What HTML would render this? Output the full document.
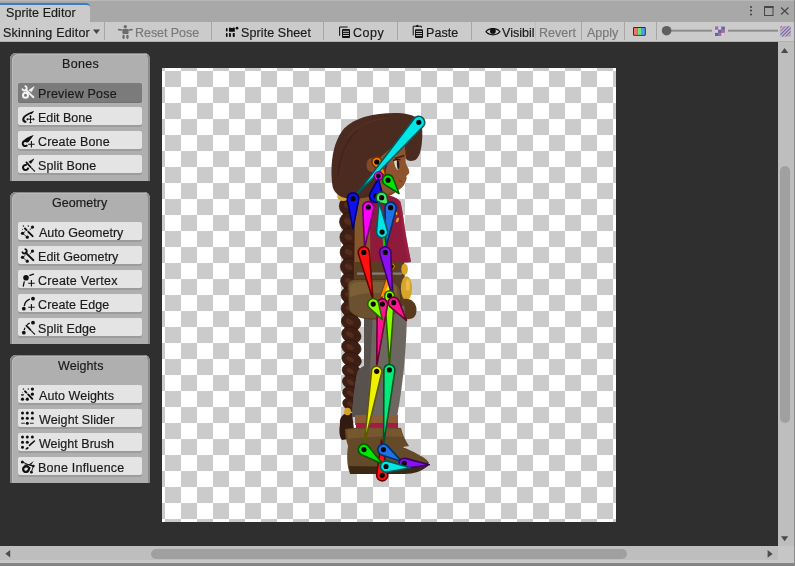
<!DOCTYPE html>
<html><head><meta charset="utf-8"><style>
html,body{margin:0;padding:0;}
body{width:795px;height:566px;position:relative;overflow:hidden;background:#2f2f2f;font-family:"Liberation Sans",sans-serif;font-size:12.5px;color:#1b1b1b;}
.a{position:absolute;}
.t{position:absolute;line-height:14px;white-space:nowrap;will-change:transform;-webkit-text-stroke:0.2px currentColor;}
#tabstrip{left:0;top:0;width:795px;height:22px;background:#a8a8a8;border-top:1px solid #b8b8b8;box-sizing:border-box;}
#tab{left:0;top:3px;width:90px;height:19px;background:#cbcbcb;border-top:2px solid #3b7cc9;box-sizing:border-box;border-top-right-radius:4px;}
#toolbar{left:0;top:22px;width:795px;height:20px;background:#cbcbcb;border-bottom:1.5px solid #b2b2b2;box-sizing:border-box;}
.sep{position:absolute;top:22px;width:1px;height:18px;background:#a6a6a6;}
.panel{position:absolute;left:10px;width:140px;background:#afafaf;border-top-left-radius:6px;border-top-right-radius:6px;box-sizing:border-box;box-shadow:inset 2px 1px 0 #868686,inset 3px 2px 0 #bababa,inset -2px 0 0 #8c8c8c;}
.btn{position:absolute;left:8px;width:124px;height:18px;background:#e4e4e4;border-radius:2px;box-shadow:0 2px 0 #9c9c9c;}
.btn.on{background:#7b7b7b;height:19px;box-shadow:0 1px 0 #727272;}
.btn .t{left:20px;top:4px;}
.btn svg{position:absolute;left:0;top:-1px;}
.ph{position:absolute;left:0;width:100%;text-align:center;line-height:14px;}
#canvas{left:162px;top:68px;width:454px;height:454px;background-color:#fff;background-image:repeating-conic-gradient(#cbcbcb 0 25%,#fff 0 50%);background-size:32px 32px;background-position:-13px 3px;}
#vscroll{left:778px;top:42px;width:16px;height:504px;background:#bebebe;}
#hscroll{left:0;top:546px;width:778px;height:14px;background:#bebebe;}
#corner{left:778px;top:546px;width:16px;height:14px;background:#c6c6c6;}
#bottomstrip{left:0;top:560px;width:795px;height:4px;background:#c8c8c8;}
#bottomline{left:0;top:563px;width:795px;height:3px;background:#848484;}
#rightline{left:794px;top:0;width:1px;height:566px;background:#8a8a8a;}
</style></head><body>
<div id="tabstrip" class="a"></div><div id="tab" class="a"></div>
<div class="t" style="left:5.6px;top:6px;letter-spacing:0.075px;">Sprite Editor</div>
<svg class="a" style="left:745px;top:3px" width="50" height="16" viewBox="0 0 50 16">
 <circle cx="6" cy="4" r="1.1" fill="#474747"/><circle cx="6" cy="7.6" r="1.1" fill="#474747"/><circle cx="6" cy="11.5" r="1.1" fill="#474747"/>
 <rect x="19.5" y="3.5" width="8.5" height="9" fill="none" stroke="#474747" stroke-width="1"/><rect x="19" y="3" width="9.5" height="2" fill="#474747"/>
 <path d="M36 4.5 L43.5 11.5 M43.5 4.5 L36 11.5" stroke="#474747" stroke-width="1.2"/></svg>
<div id="toolbar" class="a"></div>
<div class="t" style="left:2.7px;top:26px;letter-spacing:0.19px;">Skinning Editor</div>
<svg class="a" style="left:92px;top:29px" width="9" height="6"><path d="M1 0.5 L8 0.5 L4.5 5 Z" fill="#444"/></svg>
<div class="sep" style="left:104px"></div>
<div class="sep" style="left:211px"></div>
<div class="sep" style="left:323px"></div>
<div class="sep" style="left:397px"></div>
<div class="sep" style="left:471px"></div>
<div class="sep" style="left:581px"></div>
<div class="sep" style="left:624px"></div>
<div class="sep" style="left:656px"></div>
<div class="sep" style="left:535px;background:#bdbdbd"></div>
<svg class="a" style="left:115px;top:21px" width="22" height="22" viewBox="0 0 22 22"><circle cx="10.3" cy="5.8" r="1.7" fill="#6c6c6c"/><rect x="7.4" y="8.1" width="6.2" height="4.8" rx="0.8" fill="#6c6c6c"/>
<path d="M3.6 8.6 L6.8 9" stroke="#6c6c6c" stroke-width="1.7" stroke-linecap="round"/><path d="M14.2 9 L17 8.6" stroke="#6c6c6c" stroke-width="1.7" stroke-linecap="round"/>
<rect x="7.4" y="13.8" width="2.3" height="4.1" rx="1.1" fill="#6c6c6c"/><rect x="11.3" y="13.8" width="2.3" height="4.1" rx="1.1" fill="#6c6c6c"/></svg>
<svg class="a" style="left:221px;top:21px" width="22" height="22" viewBox="0 0 22 22"><rect x="4.9" y="7" width="1.7" height="3.5" rx="0.7" fill="#111"/><rect x="4.9" y="12" width="1.7" height="4" rx="0.7" fill="#111"/>
<path d="M8 6.8 L9.4 6.4 L10 7 L11.8 7 L12.4 6.4 L13.8 6.8 L13.8 10.7 L8 10.7 Z" fill="#111"/>
<rect x="8" y="12" width="1.9" height="4" rx="0.7" fill="#111"/><rect x="11.7" y="12" width="2.1" height="4" rx="0.7" fill="#111"/>
<circle cx="16" cy="7.2" r="1.4" fill="#111"/></svg>
<svg class="a" style="left:334px;top:21px" width="22" height="22" viewBox="0 0 22 22"><path d="M5.6 14.8 L5.6 6 L13.6 6" fill="none" stroke="#111" stroke-width="1"/>
<rect x="8" y="8" width="8" height="8.9" rx="1" fill="#111"/>
<path d="M9 10.3 L15 10.3 M9 12.4 L15 12.4 M9 14.5 L15 14.5" stroke="#d6d6d6" stroke-width="0.9"/></svg>
<svg class="a" style="left:407px;top:21px" width="22" height="22" viewBox="0 0 22 22"><path d="M6.2 14.4 L6.2 5.2 L14.4 5.2 L14.4 6.6" fill="none" stroke="#111" stroke-width="1"/>
<path d="M8.8 5.8 C9 4.6 9.6 3.8 10.3 3.8 C11 3.8 11.6 4.6 11.8 5.8 Z" fill="#111"/>
<rect x="8" y="8.2" width="8" height="8.7" rx="1" fill="#111"/>
<path d="M9 10.4 L15 10.4 M9 12.5 L15 12.5 M9 14.6 L15 14.6" stroke="#d6d6d6" stroke-width="0.9"/></svg>
<svg class="a" style="left:482px;top:21px" width="22" height="22" viewBox="0 0 22 22"><path d="M4 10.7 C7 6.6 14.8 6.6 17.9 10.7 C14.8 14.8 7 14.8 4 10.7 Z" fill="none" stroke="#111" stroke-width="1.2"/>
<circle cx="10.9" cy="10" r="2.9" fill="#111"/></svg>
<svg class="a" style="left:628px;top:21px" width="22" height="22" viewBox="0 0 22 22"><rect x="5.1" y="6" width="12.6" height="8.8" rx="1" fill="#222"/>
<rect x="6" y="6.9" width="3.7" height="7" fill="#f07474"/><rect x="9.7" y="6.9" width="3.3" height="7" fill="#74e074"/><rect x="13" y="6.9" width="3.8" height="7" fill="#4e9ef0"/></svg>
<div class="t" style="left:134.5px;top:26px;letter-spacing:-0.05px;color:#7a7a7a;">Reset Pose</div>
<div class="t" style="left:240.9px;top:26px;letter-spacing:0.1px;">Sprite Sheet</div>
<div class="t" style="left:353.2px;top:26px;letter-spacing:0.5px;">Copy</div>
<div class="t" style="left:426.0px;top:26px;letter-spacing:0.05px;">Paste</div>
<div class="t" style="left:502.2px;top:26px;letter-spacing:0.03px;">Visibil</div>
<div class="t" style="left:538.8px;top:26px;letter-spacing:0.04px;color:#7a7a7a;">Revert</div>
<div class="t" style="left:587.1px;top:26px;letter-spacing:0.0px;color:#7a7a7a;">Apply</div>
<svg class="a" style="left:656px;top:21px" width="139" height="21" viewBox="656 21 139 21">
<rect x="666" y="29.7" width="46" height="2" fill="#8c8c8c"/><circle cx="666.6" cy="30.7" r="4.8" fill="#5f5f5f"/>
<rect x="728" y="29.7" width="50" height="2" fill="#8c8c8c"/>
<g transform="translate(715 26.7)"><rect width="9.7" height="9.3" fill="#8a7aa8"/>
<rect x="0" y="0" width="3.2" height="3.1" fill="#b06a8a"/><rect x="3.2" y="0" width="3.2" height="3.1" fill="#e0c8e0"/><rect x="6.4" y="0" width="3.3" height="3.1" fill="#5a6ab0"/>
<rect x="0" y="3.1" width="3.2" height="3.1" fill="#e0c8e0"/><rect x="3.2" y="3.1" width="3.2" height="3.1" fill="#5a6ab0"/><rect x="6.4" y="3.1" width="3.3" height="3.1" fill="#b06a8a"/>
<rect x="0" y="6.2" width="3.2" height="3.1" fill="#5a6ab0"/><rect x="3.2" y="6.2" width="3.2" height="3.1" fill="#b06a8a"/><rect x="6.4" y="6.2" width="3.3" height="3.1" fill="#e0c8e0"/></g>
<g transform="translate(780.5 26.3)"><rect width="10.1" height="10.1" fill="#9a88b0"/>
<path d="M0 3 L3 0 M0 6.5 L6.5 0 M0 10 L10 0 M3.5 10 L10 3.5 M7 10 L10 7" stroke="#d4b4cc" stroke-width="1.2"/>
<path d="M0 1.2 L1.2 0 M0 8.3 L8.3 0 M1.7 10 L10 1.7 M5.2 10 L10 5.2" stroke="#6470a8" stroke-width="1"/></g>
</svg>
<div id="canvas" class="a"></div>
<svg class="a" style="left:0;top:0" width="795" height="566" viewBox="0 0 795 566"><path d="M340 424 C339 417 344 412 352 413 L355 438 L342 440 C339 436 339 430 340 424 Z" fill="#331a10"/><path d="M343.5 198 C343 260 345 340 347 408 L357.5 408 C358 340 357.5 260 355.5 198 Z" fill="#2f170f"/><ellipse cx="349.3" cy="206.0" rx="10.0" ry="9.9" fill="#3f1f14" stroke="#2a130b" stroke-width="0.6" transform="rotate(22 349.3 206.0)"/><ellipse cx="347.8" cy="205.5" rx="4.2" ry="3.0" fill="#5b3222" opacity="0.75" transform="rotate(30 347.8 205.5)"/><ellipse cx="349.5" cy="222.0" rx="10.0" ry="9.6" fill="#3f1f14" stroke="#2a130b" stroke-width="0.6" transform="rotate(22 349.5 222.0)"/><ellipse cx="348.0" cy="221.5" rx="4.2" ry="2.9" fill="#5b3222" opacity="0.75" transform="rotate(30 348.0 221.5)"/><ellipse cx="349.8" cy="237.6" rx="10.0" ry="9.4" fill="#3f1f14" stroke="#2a130b" stroke-width="0.6" transform="rotate(22 349.8 237.6)"/><ellipse cx="348.3" cy="237.1" rx="4.2" ry="2.8" fill="#5b3222" opacity="0.75" transform="rotate(30 348.3 237.1)"/><ellipse cx="350.0" cy="252.7" rx="10.0" ry="9.1" fill="#3f1f14" stroke="#2a130b" stroke-width="0.6" transform="rotate(22 350.0 252.7)"/><ellipse cx="348.5" cy="252.2" rx="4.2" ry="2.7" fill="#5b3222" opacity="0.75" transform="rotate(30 348.5 252.2)"/><ellipse cx="350.2" cy="267.4" rx="10.0" ry="8.9" fill="#3f1f14" stroke="#2a130b" stroke-width="0.6" transform="rotate(22 350.2 267.4)"/><ellipse cx="348.7" cy="266.9" rx="4.2" ry="2.7" fill="#5b3222" opacity="0.75" transform="rotate(30 348.7 266.9)"/><ellipse cx="350.4" cy="281.7" rx="10.0" ry="8.6" fill="#3f1f14" stroke="#2a130b" stroke-width="0.6" transform="rotate(22 350.4 281.7)"/><ellipse cx="348.9" cy="281.2" rx="4.2" ry="2.6" fill="#5b3222" opacity="0.75" transform="rotate(30 348.9 281.2)"/><ellipse cx="350.7" cy="295.6" rx="10.0" ry="8.4" fill="#3f1f14" stroke="#2a130b" stroke-width="0.6" transform="rotate(22 350.7 295.6)"/><ellipse cx="349.2" cy="295.1" rx="4.2" ry="2.5" fill="#5b3222" opacity="0.75" transform="rotate(30 349.2 295.1)"/><ellipse cx="350.9" cy="309.2" rx="10.0" ry="8.2" fill="#3f1f14" stroke="#2a130b" stroke-width="0.6" transform="rotate(22 350.9 309.2)"/><ellipse cx="349.4" cy="308.7" rx="4.2" ry="2.4" fill="#5b3222" opacity="0.75" transform="rotate(30 349.4 308.7)"/><ellipse cx="351.1" cy="322.3" rx="10.0" ry="7.9" fill="#3f1f14" stroke="#2a130b" stroke-width="0.6" transform="rotate(22 351.1 322.3)"/><ellipse cx="349.6" cy="321.8" rx="4.2" ry="2.4" fill="#5b3222" opacity="0.75" transform="rotate(30 349.6 321.8)"/><ellipse cx="351.3" cy="335.1" rx="10.0" ry="7.7" fill="#3f1f14" stroke="#2a130b" stroke-width="0.6" transform="rotate(22 351.3 335.1)"/><ellipse cx="349.8" cy="334.6" rx="4.2" ry="2.3" fill="#5b3222" opacity="0.75" transform="rotate(30 349.8 334.6)"/><ellipse cx="351.4" cy="347.6" rx="10.0" ry="7.5" fill="#3f1f14" stroke="#2a130b" stroke-width="0.6" transform="rotate(22 351.4 347.6)"/><ellipse cx="349.9" cy="347.1" rx="4.2" ry="2.3" fill="#5b3222" opacity="0.75" transform="rotate(30 349.9 347.1)"/><ellipse cx="351.6" cy="359.7" rx="10.0" ry="7.3" fill="#3f1f14" stroke="#2a130b" stroke-width="0.6" transform="rotate(22 351.6 359.7)"/><ellipse cx="350.1" cy="359.2" rx="4.2" ry="2.2" fill="#5b3222" opacity="0.75" transform="rotate(30 350.1 359.2)"/><ellipse cx="351.8" cy="371.5" rx="10.0" ry="7.1" fill="#3f1f14" stroke="#2a130b" stroke-width="0.6" transform="rotate(22 351.8 371.5)"/><ellipse cx="350.3" cy="371.0" rx="4.2" ry="2.1" fill="#5b3222" opacity="0.75" transform="rotate(30 350.3 371.0)"/><ellipse cx="352.0" cy="382.9" rx="10.0" ry="6.9" fill="#3f1f14" stroke="#2a130b" stroke-width="0.6" transform="rotate(22 352.0 382.9)"/><ellipse cx="350.5" cy="382.4" rx="4.2" ry="2.1" fill="#5b3222" opacity="0.75" transform="rotate(30 350.5 382.4)"/><ellipse cx="352.2" cy="394.0" rx="10.0" ry="6.7" fill="#3f1f14" stroke="#2a130b" stroke-width="0.6" transform="rotate(22 352.2 394.0)"/><ellipse cx="350.7" cy="393.5" rx="4.2" ry="2.0" fill="#5b3222" opacity="0.75" transform="rotate(30 350.7 393.5)"/><ellipse cx="352.3" cy="404.9" rx="10.0" ry="6.5" fill="#3f1f14" stroke="#2a130b" stroke-width="0.6" transform="rotate(22 352.3 404.9)"/><ellipse cx="350.8" cy="404.4" rx="4.2" ry="2.0" fill="#5b3222" opacity="0.75" transform="rotate(30 350.8 404.4)"/><ellipse cx="347.5" cy="411.5" rx="3.4" ry="3.8" fill="#d7a328"/><path d="M364 306 L407 306 C407 340 404 380 397 417 L352 417 C353 400 355 385 357 374 C358 370 360 368 364 366 C365 345 364 325 364 306 Z" fill="#6c6761"/><path d="M364 310 L373 310 L368 417 L352 417 C353 400 355 385 357 374 C358 370 360 368 364 366 Z" fill="#57524d"/><rect x="355" y="415" width="43" height="10" fill="#8e5c37"/><rect x="356" y="423" width="42" height="5" fill="#a11c45"/><path d="M345 429 C360 427 385 427 401 428 C403 436 406 441 409 446 L403 447 C413 452 424 456 428.5 462 C428 468 420 472 405 473 L350 473 C347 468 346.5 455 348 446 C346 440 345 434 345 429 Z" fill="#654a29"/><path d="M347 430 C362 428 386 428 400 429 L403 437 C388 436 362 437 348 439 Z" fill="#76582f"/><path d="M349 466 L404 467 C416 466 425 464 428.5 462 L428 466 C422 471 414 474 404 474 L350 474 Z" fill="#3a2814"/><path d="M357 197 C364 193 376 193 386 195 C393 196 398 198 400.5 202 C402 208 403 215 404 222 C406 238 409 250 411 262 C396 264 372 264 357 263 Z" fill="#8f1a3c"/><ellipse cx="397.5" cy="220" rx="1.3" ry="2.6" fill="#d9a62a" transform="rotate(25 397.5 220)"/><ellipse cx="396.5" cy="213.5" rx="0.9" ry="1.6" fill="#d9a62a"/><path d="M396 198 C399 203 400.5 212 401.5 222 C403.5 240 406 252 408 262 L411 262 C409 250 406 238 404 222 C403 215 402 208 400.5 202 Z" fill="#a3234a" opacity="0.6"/><path d="M355 199 L369 197 C370 220 370.5 250 371 300 L354 300 Z" fill="#87572c"/><path d="M354 262 L404 262 L406 306 L354 306 Z" fill="#5a3e22"/><rect x="357" y="272.5" width="45" height="2.2" fill="#837e78"/><path d="M348 286 C348 281 352 279.5 357 279.5 L384 279.5 C392 280 398 283 400 290 L401 306 C398 314 388 319 374 319 C362 319 352 316 349 309 Z" fill="#6b5130" stroke="#4a3418" stroke-width="0.8"/><path d="M350 287 C351 283 355 282 360 282 L384 282 C390 282 395 284 397 289 L397 296 C386 292 364 292 350 297 Z" fill="#7a5f37"/><ellipse cx="404.6" cy="269.2" rx="3.3" ry="5.6" fill="#d9a62a"/><ellipse cx="406.5" cy="288.2" rx="5.6" ry="12" fill="#d8a52b"/><ellipse cx="407.8" cy="285" rx="2" ry="6" fill="#ecc350" opacity="0.8"/><path d="M404 299 C411 298 416.5 303 416.5 310 C416.5 318 411 320 405 319 Z" fill="#5a3a1c"/><path d="M337.5 193 C340 190 345 190 348 193 L347 200 C344 202 339 201 337.5 198 Z" fill="#d3a12c"/><path d="M380 178 L394 180 C397 184 398 188 397 191 C394 194 390 196 386 197 L380 197 Z" fill="#7c4322"/><path d="M332.5 186 C330.5 172 331.5 156 335.3 144.7 C338 137 341 132 344 128.5 C349 123.5 356 119.5 364 117 C374 114 386 112.8 398 113 C408 113.4 417 116 420.5 121 C423 127 422.6 138 421.5 146 C420.5 152 419.5 156 416 159.5 C412 162 407 161 405.5 158 L404 146 L380 192 C370 198 355 200 345 198 C338 196 334 192 332.5 186 Z" fill="#4b2a1f"/><path d="M347 138 C354 128 368 121 385 118" stroke="#5a3324" stroke-width="2" fill="none" opacity="0.5"/><path d="M338 175 C340 155 346 140 358 130" stroke="#3d2018" stroke-width="1.5" fill="none" opacity="0.6"/><path d="M399 143 L404.5 145 C405.5 150 405.8 156 405.6 162 C406.5 166 409.5 169 409.3 172.2 C409 174.5 406.5 175 406.3 176.3 C407 178 406.5 180 405.2 182.5 C404 186 401 189 396 191.5 L386 194 L376 181 L372 168 C378 158 390 148 399 143 Z" fill="#8f542e"/><ellipse cx="371.5" cy="165" rx="5" ry="7" fill="#85492a"/><path d="M394 160.8 C396.5 160 399 160.5 399.5 163 C399.8 166 398.6 169.5 397.5 170 C395.5 168.5 394.2 164 394 160.8 Z" fill="#ddd5cc"/><path d="M397 160 C398.8 160.2 399.8 162 399.7 165 C399.6 167.5 398.8 169 398 169.5 C397 168 396.6 162.5 397 160 Z" fill="#2a1811"/><path d="M393.2 160.6 C395.5 159.4 398.5 159 400.5 160" stroke="#2a1811" stroke-width="1.2" fill="none"/><path d="M395 158.6 L404.3 155.6" stroke="#3a2016" stroke-width="1.6"/><path d="M399 180.8 L402 181.6" stroke="#5a3018" stroke-width="0.8"/><path d="M382.71 177.31 L391.00 150.00 L374.71 173.43 A4.5 4.5 0 1 0 382.71 177.31 Z" fill="#ff00ff" stroke="#6a006a" stroke-width="1.6" stroke-linejoin="round"/><circle cx="378.4" cy="176" r="2.6" fill="#050505"/><path d="M373.45 165.71 L386.50 177.50 L381.60 160.61 A5 5 0 1 0 373.45 165.71 Z" fill="#ff7f00" stroke="#6a3500" stroke-width="1.6" stroke-linejoin="round"/><circle cx="376.8" cy="162" r="2.6" fill="#050505"/><path d="M414.03 118.66 L355.50 195.50 L423.09 126.50 A6 6 0 1 0 414.03 118.66 Z" fill="#00e6e6" stroke="#005a5a" stroke-width="1.6" stroke-linejoin="round"/><circle cx="418.8" cy="122.3" r="2.6" fill="#050505"/><path d="M385.10 184.87 L399.00 193.50 L393.13 178.23 A5.5 5.5 0 1 0 385.10 184.87 Z" fill="#00e600" stroke="#005a00" stroke-width="1.6" stroke-linejoin="round"/><circle cx="388" cy="180.2" r="2.6" fill="#050505"/><circle cx="378.4" cy="176" r="4.2" fill="#ff00ff" stroke="#6a006a" stroke-width="1"/><circle cx="378.4" cy="176" r="2.4" fill="#050505"/><path d="M382.31 194.45 L378.40 178.50 L370.34 192.81 A6.5 6.5 0 1 0 382.31 194.45 Z" fill="#1111ee" stroke="#000070" stroke-width="1.6" stroke-linejoin="round"/><circle cx="376" cy="196" r="2.6" fill="#050505"/><path d="M347.31 199.83 L353.00 228.50 L358.69 199.83 A5.8 5.8 0 1 0 347.31 199.83 Z" fill="#1111ee" stroke="#000070" stroke-width="1.6" stroke-linejoin="round"/><circle cx="353" cy="198.7" r="2.6" fill="#050505"/><path d="M380.32 203.05 L388.50 205.00 L387.01 196.73 A5.5 5.5 0 1 0 380.32 203.05 Z" fill="#4de36a" stroke="#0b5a1e" stroke-width="1.6" stroke-linejoin="round"/><circle cx="381.6" cy="197.7" r="2.6" fill="#050505"/><path d="M362.71 207.46 L364.60 248.00 L373.76 208.46 A5.6 5.6 0 1 0 362.71 207.46 Z" fill="#ff00ff" stroke="#6a006a" stroke-width="1.6" stroke-linejoin="round"/><circle cx="368.3" cy="207.2" r="2.6" fill="#050505"/><path d="M385.00 207.81 L385.80 248.00 L396.02 209.12 A5.6 5.6 0 1 0 385.00 207.81 Z" fill="#1f72e6" stroke="#00306a" stroke-width="1.6" stroke-linejoin="round"/><circle cx="390.6" cy="207.7" r="2.6" fill="#050505"/><path d="M383.4 236 L384.6 250" stroke="#00d000" stroke-width="2"/><path d="M387.48 230.53 L379.00 201.50 L376.52 231.64 A5.6 5.6 0 1 0 387.48 230.53 Z" fill="#00e6e6" stroke="#005a5a" stroke-width="1.6" stroke-linejoin="round"/><circle cx="382.1" cy="232.1" r="2.6" fill="#050505"/><path d="M391.4 264 L380 297 L394 297 Z" fill="#ff8a00" stroke="#6a3500" stroke-width="0.8"/><path d="M388 285 L383 298 L396 298 Z" fill="#eeee00"/><circle cx="391.4" cy="266.6" r="3.8" fill="#ff8a00" stroke="#6a3500" stroke-width="1"/><circle cx="391.4" cy="266.6" r="2.4" fill="#050505"/><path d="M358.46 254.10 L372.90 299.40 L369.38 251.99 A5.6 5.6 0 1 0 358.46 254.10 Z" fill="#ff1111" stroke="#6a0000" stroke-width="1.6" stroke-linejoin="round"/><circle cx="363.8" cy="252.4" r="2.6" fill="#050505"/><path d="M379.83 254.00 L392.60 296.90 L390.80 252.17 A5.6 5.6 0 1 0 379.83 254.00 Z" fill="#8a10f0" stroke="#3a006a" stroke-width="1.6" stroke-linejoin="round"/><circle cx="385.2" cy="252.4" r="2.6" fill="#050505"/><path d="M384.61 296.05 L389.50 365.00 L394.59 296.07 A5 5 0 1 0 384.61 296.05 Z" fill="#88ff00" stroke="#2f5a00" stroke-width="1.6" stroke-linejoin="round"/><circle cx="389.6" cy="295.7" r="2.6" fill="#050505"/><path d="M377.20 304.06 L376.70 366.30 L387.52 305.00 A5.2 5.2 0 1 0 377.20 304.06 Z" fill="#ff1493" stroke="#6a0030" stroke-width="1.6" stroke-linejoin="round"/><circle cx="382.4" cy="304.1" r="2.6" fill="#050505"/><path d="M369.53 308.20 L382.40 319.70 L378.56 302.88 A5.5 5.5 0 1 0 369.53 308.20 Z" fill="#88ff00" stroke="#2f5a00" stroke-width="1.6" stroke-linejoin="round"/><circle cx="373.2" cy="304.1" r="2.6" fill="#050505"/><path d="M390.19 306.93 L406.40 320.40 L398.83 300.73 A5.5 5.5 0 1 0 390.19 306.93 Z" fill="#ff1493" stroke="#6a0030" stroke-width="1.6" stroke-linejoin="round"/><circle cx="393.7" cy="302.7" r="2.6" fill="#050505"/><path d="M371.52 370.79 L364.30 444.50 L381.75 372.53 A5.2 5.2 0 1 0 371.52 370.79 Z" fill="#f0f000" stroke="#5a5a00" stroke-width="1.6" stroke-linejoin="round"/><circle cx="376.7" cy="371.3" r="2.6" fill="#050505"/><path d="M383.90 369.88 L383.60 444.50 L394.84 370.73 A5.5 5.5 0 1 0 383.90 369.88 Z" fill="#00ee77" stroke="#00502a" stroke-width="1.6" stroke-linejoin="round"/><circle cx="389.4" cy="369.9" r="2.6" fill="#050505"/><path d="M387.71 474.30 L381.50 440.00 L376.65 474.52 A5.6 5.6 0 1 0 387.71 474.30 Z" fill="#ff1111" stroke="#6a0000" stroke-width="1.6" stroke-linejoin="round"/><circle cx="382.2" cy="475.3" r="2.6" fill="#050505"/><path d="M361.65 454.73 L382.80 464.00 L368.25 446.07 A5.6 5.6 0 1 0 361.65 454.73 Z" fill="#00e600" stroke="#005a00" stroke-width="1.6" stroke-linejoin="round"/><circle cx="363.9" cy="449.6" r="2.6" fill="#050505"/><path d="M381.65 454.92 L401.70 461.50 L387.56 445.85 A5.6 5.6 0 1 0 381.65 454.92 Z" fill="#1f72e6" stroke="#00306a" stroke-width="1.6" stroke-linejoin="round"/><circle cx="383.4" cy="449.6" r="2.6" fill="#050505"/><path d="M405.01 468.54 L429.30 464.70 L405.54 458.37 A5.2 5.2 0 1 0 405.01 468.54 Z" fill="#8a10f0" stroke="#3a006a" stroke-width="1.6" stroke-linejoin="round"/><circle cx="404.2" cy="463.4" r="2.6" fill="#050505"/><path d="M386.99 472.01 L410.50 467.80 L387.57 461.12 A5.6 5.6 0 1 0 386.99 472.01 Z" fill="#00e6e6" stroke="#005a5a" stroke-width="1.6" stroke-linejoin="round"/><circle cx="386" cy="466.5" r="2.6" fill="#050505"/></svg>
<div class="panel" style="top:53px;height:128px;"><div class="t" style="left:52.0px;top:4px;letter-spacing:0.3px">Bones</div><div class="btn on" style="top:30px"><svg width="22" height="22" viewBox="0 0 22 22"><path d="M4.4 6.4 A2.2 2.2 0 1 0 6.6 4.2" fill="none" stroke="#f4f4f4" stroke-width="1.7"/>
<path d="M7.6 7.6 L15.4 15.2" stroke="#f4f4f4" stroke-width="1.9" stroke-linecap="round"/>
<circle cx="7.5" cy="13.3" r="2.5" fill="none" stroke="#f4f4f4" stroke-width="2"/>
<path d="M10.7 8.3 L16.2 4.6 L13.6 9.7 Z" fill="#f4f4f4" stroke="#f4f4f4" stroke-width="0.6" stroke-linejoin="round"/></svg><div class="t" style="left:20.3px;letter-spacing:0.2px">Preview Pose</div></div><div class="btn" style="top:54px"><svg width="22" height="22" viewBox="0 0 22 22"><path d="M15.9 4.9 C11.8 6.2 7.8 8 5.6 10.2 C3.8 12.2 3.9 14.8 5.3 15.9 C6.2 16.6 7.3 16.8 8.4 16.7 L8.3 14.8 C7.4 14.8 6.7 14.5 6.5 13.8 C6.2 12.8 6.8 11.6 8 10.6 C10 9 12.2 7.8 14.6 6.9 Z" fill="#111"/>
<path d="M15.9 4.9 L13.5 8.2 L12.6 7 Z" fill="#111"/>
<path d="M9.2 13.2 L15.9 13.2 M12.5 10 L12.5 16.6" stroke="#111" stroke-width="1"/>
<path d="M12.5 8.9 L14 10.5 L11 10.5 Z M12.5 17.6 L14 16 L11 16 Z M8.2 13.2 L9.8 11.7 L9.8 14.7 Z M16.8 13.2 L15.2 11.7 L15.2 14.7 Z" fill="#111"/></svg><div class="t" style="left:20.3px;letter-spacing:0px">Edit Bone</div></div><div class="btn" style="top:78px"><svg width="22" height="22" viewBox="0 0 22 22"><path d="M9.6 12.2 A2.6 2.6 0 1 0 9.3 15.2" fill="none" stroke="#111" stroke-width="2"/>
<path d="M4.9 11.6 C6.5 8.6 10.5 6.4 15.8 4.9 C13.8 7.8 12 10.4 10.2 12.2 C8.8 11.2 6.8 11 4.9 11.6 Z" fill="#111"/>
<path d="M10.2 14.2 L16.7 14.2 M13.4 10.9 L13.4 17.5" stroke="#111" stroke-width="1.1"/></svg><div class="t" style="left:20.3px;letter-spacing:0.14px">Create Bone</div></div><div class="btn" style="top:102px"><svg width="22" height="22" viewBox="0 0 22 22"><path d="M8.8 11.2 A2.6 2.6 0 1 0 10.2 13.6" fill="none" stroke="#111" stroke-width="2"/>
<path d="M10.8 7.8 L15.9 4.9 L12.9 9.4 Z" fill="#111" stroke="#111" stroke-width="0.6" stroke-linejoin="round"/>
<path d="M8.4 8.4 L12.6 13" stroke="#111" stroke-width="1.8" stroke-linecap="round"/>
<path d="M13.6 14.2 L14.6 15.2 M15.4 16 L16.6 17.1" stroke="#111" stroke-width="1.2" stroke-linecap="round"/></svg><div class="t" style="left:20.3px;letter-spacing:0.13px">Split Bone</div></div></div>
<div class="panel" style="top:192px;height:152px;"><div class="t" style="left:42.4px;top:4px;letter-spacing:0.04px">Geometry</div><div class="btn" style="top:30px"><svg width="22" height="22" viewBox="0 0 22 22"><circle cx="5.4" cy="5.1" r="0.8" fill="#333"/><circle cx="10.3" cy="5.1" r="0.8" fill="#333"/><circle cx="4.5" cy="8.3" r="0.6" fill="#555"/>
<circle cx="4.5" cy="12.3" r="1.6" fill="#111"/><circle cx="9.3" cy="16.2" r="1.6" fill="#111"/><circle cx="14.5" cy="6.1" r="1.6" fill="#111"/>
<path d="M4.5 12.3 L9.3 16.2 M4.5 12.3 L7.2 10.6 M14.5 6.1 L11.6 9.2" stroke="#111" stroke-width="0.8"/>
<path d="M7 7.5 L8.6 9.1 M10.3 10.8 L14.6 15.2" stroke="#111" stroke-width="1.9" stroke-linecap="round"/></svg><div class="t" style="left:21.3px;letter-spacing:0.025px">Auto Geometry</div></div><div class="btn" style="top:54px"><svg width="22" height="22" viewBox="0 0 22 22"><path d="M4.4 6.4 A2.2 2.2 0 1 0 6.6 4.2" fill="none" stroke="#111" stroke-width="1.7"/>
<path d="M7.6 7.6 L15.4 15.2" stroke="#111" stroke-width="1.9" stroke-linecap="round"/>
<circle cx="4.5" cy="12.3" r="1.6" fill="#111"/><circle cx="9.3" cy="16.2" r="1.6" fill="#111"/><circle cx="14.5" cy="6.1" r="1.6" fill="#111"/>
<path d="M4.5 12.3 L9.3 16.2 M4.5 12.3 L7.4 10.4 M14.5 6.1 L11.8 9.2" stroke="#111" stroke-width="0.8"/></svg><div class="t" style="left:20.3px;letter-spacing:0.04px">Edit Geometry</div></div><div class="btn" style="top:78px"><svg width="22" height="22" viewBox="0 0 22 22"><circle cx="8" cy="8.7" r="2.8" fill="#111"/>
<path d="M11.8 6.4 L15.5 5.1 M6.2 12.9 L5.3 17" stroke="#111" stroke-width="1.3" stroke-linecap="round"/>
<path d="M10.2 14.2 L16.7 14.2 M13.4 10.9 L13.4 17.5" stroke="#111" stroke-width="1.1"/></svg><div class="t" style="left:20.3px;letter-spacing:0.25px">Create Vertex</div></div><div class="btn" style="top:102px"><svg width="22" height="22" viewBox="0 0 22 22"><circle cx="5.8" cy="15.7" r="1.9" fill="#111"/><circle cx="15" cy="5.7" r="1.9" fill="#111"/>
<path d="M6.4 12.5 C6.8 9.4 8.6 7.4 11.3 6.3" fill="none" stroke="#111" stroke-width="1.4" stroke-linecap="round"/>
<path d="M10.2 14.2 L16.7 14.2 M13.4 10.9 L13.4 17.5" stroke="#111" stroke-width="1.1"/></svg><div class="t" style="left:20.3px;letter-spacing:0.1px">Create Edge</div></div><div class="btn" style="top:126px"><svg width="22" height="22" viewBox="0 0 22 22"><circle cx="5.8" cy="15.7" r="1.9" fill="#111"/><circle cx="15" cy="5.7" r="1.9" fill="#111"/>
<path d="M6.3 12.6 L6.8 11.1 M9.6 7.3 L11.3 6.3" fill="none" stroke="#111" stroke-width="1.3" stroke-linecap="round"/>
<path d="M8.4 8.6 L12.6 13" stroke="#111" stroke-width="1.8" stroke-linecap="round"/>
<path d="M13.6 14.2 L14.6 15.2 M15.4 16 L16.6 17.1" stroke="#111" stroke-width="1.2" stroke-linecap="round"/></svg><div class="t" style="left:20.3px;letter-spacing:0.11px">Split Edge</div></div></div>
<div class="panel" style="top:355px;height:128px;"><div class="t" style="left:48.0px;top:4px;letter-spacing:0.08px">Weights</div><div class="btn" style="top:30px"><svg width="22" height="22" viewBox="0 0 22 22"><circle cx="5.4" cy="5.1" r="0.8" fill="#333"/><circle cx="10.3" cy="5.1" r="0.8" fill="#333"/><circle cx="4.5" cy="8.2" r="0.5" fill="#666"/>
<circle cx="14.4" cy="5.1" r="1.6" fill="#111"/><circle cx="14.4" cy="10.2" r="1.6" fill="#111"/><circle cx="4.5" cy="15.2" r="1.6" fill="#111"/><circle cx="9.3" cy="15.2" r="1.6" fill="#111"/>
<path d="M2.9 10.2 A1.6 1.6 0 0 0 6.1 10.2 Z" fill="#111"/>
<path d="M7 7.3 L8.4 8.6 M10.1 10.4 L14.3 14.8" stroke="#111" stroke-width="1.9" stroke-linecap="round"/></svg><div class="t" style="left:21.3px;letter-spacing:0.07px">Auto Weights</div></div><div class="btn" style="top:54px"><svg width="22" height="22" viewBox="0 0 22 22"><circle cx="4.5" cy="5.1" r="1.5" fill="#111"/><circle cx="9.3" cy="5.1" r="1.5" fill="#111"/><circle cx="14.4" cy="5.1" r="1.5" fill="#111"/>
<circle cx="4.5" cy="10.2" r="1.5" fill="#111"/><circle cx="9.3" cy="10.2" r="1.5" fill="#111"/><circle cx="14.4" cy="10.2" r="1.5" fill="#111"/>
<circle cx="9.3" cy="15.2" r="1.5" fill="#111"/>
<path d="M3.2 15.2 L6.8 15.2 M11.9 15.2 L15.7 15.2" stroke="#333" stroke-width="1.1"/></svg><div class="t" style="left:21.3px;letter-spacing:0.1px">Weight Slider</div></div><div class="btn" style="top:78px"><svg width="22" height="22" viewBox="0 0 22 22"><circle cx="4.5" cy="5.1" r="1.5" fill="#111"/><circle cx="9.3" cy="5.1" r="1.5" fill="#111"/><circle cx="14.4" cy="5.1" r="1.5" fill="#111"/>
<circle cx="4.5" cy="10.2" r="1.5" fill="#111"/><circle cx="9.3" cy="10.2" r="1.5" fill="#111"/><circle cx="4.5" cy="15.2" r="1.5" fill="#111"/>
<path d="M11.5 13.4 L16.4 9" stroke="#111" stroke-width="1.6" stroke-linecap="round"/>
<path d="M7.3 17.6 C7.8 16 8.6 15 10 15 C11 15.3 10.8 16.8 9.6 17.2 C8.8 17.5 8 17.6 7.3 17.6 Z" fill="#111"/></svg><div class="t" style="left:21.3px;letter-spacing:0.02px">Weight Brush</div></div><div class="btn" style="top:102px"><svg width="22" height="22" viewBox="0 0 22 22"><path d="M10.3 11.2 C9.2 10.2 7.6 10.2 6.6 10.8 C4.8 11.8 4.6 14.4 6.3 15.5 C7.8 16.4 9.8 15.8 10.5 14.2 C11 13 11 12.2 11.8 11" fill="none" stroke="#111" stroke-width="2.3"/>
<path d="M4.3 5.9 C7.5 7.8 11 9.2 15.4 10.1" fill="none" stroke="#111" stroke-width="1.1"/>
<path d="M6.2 9.3 C9 8.2 12.3 8.4 15.4 10.1 M15.4 10.1 L13.4 16.2" fill="none" stroke="#111" stroke-width="0.9"/>
<circle cx="4.3" cy="5.9" r="1.5" fill="#111"/><circle cx="15.4" cy="10.1" r="1.3" fill="#111"/><circle cx="13.4" cy="16.2" r="1.4" fill="#111"/>
<path d="M11.2 8.2 L15.8 4.9 L13.2 8.8 Z" fill="#111"/></svg><div class="t" style="left:20.3px;letter-spacing:0.22px">Bone Influence</div></div></div>
<div id="vscroll" class="a"></div><div id="hscroll" class="a"></div><div id="corner" class="a"></div><div id="bottomstrip" class="a"></div><div id="bottomline" class="a"></div><div id="rightline" class="a"></div>
<div class="a" style="left:780px;top:166px;width:10px;height:257px;background:#a0a0a0;border-radius:5px;"></div>
<div class="a" style="left:151px;top:549px;width:476px;height:10px;background:#a0a0a0;border-radius:5px;"></div>
<svg class="a" style="left:0;top:0" width="795" height="566" viewBox="0 0 795 566"><path d="M781 53 L788.2 53 L784.6 48 Z" fill="#4a4c47"/><path d="M781 536.2 L788.2 536.2 L784.6 541.2 Z" fill="#4a4c47"/><path d="M10.2 550 L10.2 557.6 L5.3 553.8 Z" fill="#4a4c47"/><path d="M767.6 550 L767.6 557.8 L772.6 553.9 Z" fill="#4a4c47"/></svg>
</body></html>
